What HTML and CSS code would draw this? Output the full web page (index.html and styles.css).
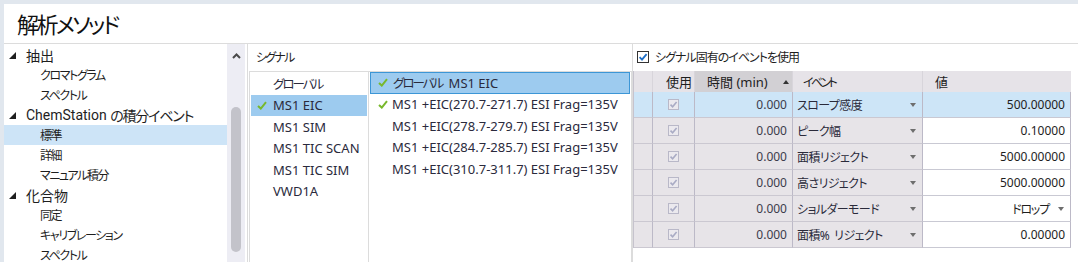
FILE: index.html
```html
<!DOCTYPE html>
<html lang="ja">
<head>
<meta charset="utf-8">
<title>解析メソッド</title>
<link rel="stylesheet" href="styles.css">
</head>
<body>
<div class="window">
  <header class="title">解析メソッド</header>
  <div class="main">
    <aside class="nav">
      <ul class="tree">
        <li class="node"><span class="tri"></span>抽出</li>
        <li class="leaf">クロマトグラム</li>
        <li class="leaf">スペクトル</li>
        <li class="node"><span class="tri"></span>ChemStation&nbsp;<span class="ja">の積分イベント</span></li>
        <li class="leaf sel">標準</li>
        <li class="leaf">詳細</li>
        <li class="leaf">マニュアル積分</li>
        <li class="node"><span class="tri"></span>化合物</li>
        <li class="leaf">同定</li>
        <li class="leaf">キャリブレーション</li>
        <li class="leaf">スペクトル</li>
      </ul>
      <div class="scrollbar">
        <div class="up"><svg width="9" height="6" viewBox="0 0 9 6"><path d="M1 5 L4.5 1.5 L8 5" fill="none" stroke="#4a4a4a" stroke-width="2"/></svg></div>
        <div class="thumb"></div>
      </div>
    </aside>
    <section class="signals">
      <div class="sig-label">シグナル</div>
      <div class="listbox">
        <ul class="list types">
          <li><span class="mark"></span><span class="ja">グローバル</span></li>
          <li class="sel"><span class="mark"><svg width="10" height="9" viewBox="0 0 10 9"><path d="M1 5 L3.8 7.6 L9 1.2" fill="none" stroke="#78b82c" stroke-width="2"/></svg></span>MS1 EIC</li>
          <li><span class="mark"></span>MS1 SIM</li>
          <li><span class="mark"></span>MS1 TIC SCAN</li>
          <li><span class="mark"></span>MS1 TIC SIM</li>
          <li><span class="mark"></span>VWD1A</li>
        </ul>
        <ul class="list sigs">
          <li class="sel"><span class="mark"><svg width="10" height="9" viewBox="0 0 10 9"><path d="M1 5 L3.8 7.6 L9 1.2" fill="none" stroke="#78b82c" stroke-width="2"/></svg></span><span class="ja">グローバル</span>&nbsp;MS1 EIC</li>
          <li><span class="mark"><svg width="10" height="9" viewBox="0 0 10 9"><path d="M1 5 L3.8 7.6 L9 1.2" fill="none" stroke="#78b82c" stroke-width="2"/></svg></span>MS1 +EIC(270.7-271.7) ESI Frag=135V</li>
          <li><span class="mark"></span>MS1 +EIC(278.7-279.7) ESI Frag=135V</li>
          <li><span class="mark"></span>MS1 +EIC(284.7-285.7) ESI Frag=135V</li>
          <li><span class="mark"></span>MS1 +EIC(310.7-311.7) ESI Frag=135V</li>
        </ul>
      </div>
    </section>
    <section class="events">
      <label class="chkrow"><span class="box"><svg width="10" height="10" viewBox="0 0 10 10"><path d="M1.6 5.2 L4 7.6 L8.6 2.2" fill="none" stroke="#1c6dc6" stroke-width="1.8"/></svg></span>シグナル固有のイベントを使用</label>
      <div class="grid">
        <div class="row head">
          <div class="h"></div>
          <div class="h use">使用</div>
          <div class="h time sorted">時間 (min)<span class="sort"></span></div>
          <div class="h ev">イベント</div>
          <div class="h val">値</div>
        </div>
        <div class="row sel">
          <div class="c"></div>
          <div class="c use"><span class="dbox"><svg width="9" height="9" viewBox="0 0 9 9"><path d="M1.5 4.6 L3.6 6.8 L7.6 2" fill="none" stroke="#a9abc4" stroke-width="1.6"/></svg></span></div>
          <div class="c time">0.000</div>
          <div class="c ev"><span>スロープ感度</span><span class="dd"></span></div>
          <div class="c val">500.00000</div>
        </div>
        <div class="row">
          <div class="c"></div>
          <div class="c use"><span class="dbox"><svg width="9" height="9" viewBox="0 0 9 9"><path d="M1.5 4.6 L3.6 6.8 L7.6 2" fill="none" stroke="#a9abc4" stroke-width="1.6"/></svg></span></div>
          <div class="c time">0.000</div>
          <div class="c ev"><span>ピーク幅</span><span class="dd"></span></div>
          <div class="c val">0.10000</div>
        </div>
        <div class="row">
          <div class="c"></div>
          <div class="c use"><span class="dbox"><svg width="9" height="9" viewBox="0 0 9 9"><path d="M1.5 4.6 L3.6 6.8 L7.6 2" fill="none" stroke="#a9abc4" stroke-width="1.6"/></svg></span></div>
          <div class="c time">0.000</div>
          <div class="c ev"><span>面積リジェクト</span><span class="dd"></span></div>
          <div class="c val">5000.00000</div>
        </div>
        <div class="row">
          <div class="c"></div>
          <div class="c use"><span class="dbox"><svg width="9" height="9" viewBox="0 0 9 9"><path d="M1.5 4.6 L3.6 6.8 L7.6 2" fill="none" stroke="#a9abc4" stroke-width="1.6"/></svg></span></div>
          <div class="c time">0.000</div>
          <div class="c ev"><span>高さリジェクト</span><span class="dd"></span></div>
          <div class="c val">5000.00000</div>
        </div>
        <div class="row">
          <div class="c"></div>
          <div class="c use"><span class="dbox"><svg width="9" height="9" viewBox="0 0 9 9"><path d="M1.5 4.6 L3.6 6.8 L7.6 2" fill="none" stroke="#a9abc4" stroke-width="1.6"/></svg></span></div>
          <div class="c time">0.000</div>
          <div class="c ev"><span>ショルダーモード</span><span class="dd"></span></div>
          <div class="c val combo"><span class="ja">ドロップ</span><span class="dd"></span></div>
        </div>
        <div class="row">
          <div class="c"></div>
          <div class="c use"><span class="dbox"><svg width="9" height="9" viewBox="0 0 9 9"><path d="M1.5 4.6 L3.6 6.8 L7.6 2" fill="none" stroke="#a9abc4" stroke-width="1.6"/></svg></span></div>
          <div class="c time">0.000</div>
          <div class="c ev"><span>面積%<span class="gap"></span>リジェクト</span><span class="dd"></span></div>
          <div class="c val">0.00000</div>
        </div>
      </div>
    </section>
  </div>
</div>
</body>
</html>
```

FILE: styles.css
```css
* { box-sizing: border-box; margin: 0; padding: 0; }
html, body { height: 100%; }
body {
  background: #e1e7ee;
  padding: 4px 0 0 4px;
  overflow: hidden;
  font-family: "Noto Sans", "Noto Sans CJK JP", sans-serif;
  font-feature-settings: "palt";
  font-size: 12px;
  color: #1e1e1e;
}
.window {
  background: #fff;
  height: 258px;
  display: flex;
  flex-direction: column;
}
.title {
  height: 40px;
  border-bottom: 1px solid #dcdcdc;
  padding-left: 13px;
  font-family: "Noto Sans CJK JP", sans-serif;
  font-size: 22px;
  line-height: 38px;
  letter-spacing: -2.6px;
  color: #111;
}
.main { display: flex; flex: 1; min-height: 0; }

/* navigation tree */
.nav { width: 243px; display: flex; }
.tree { width: 223px; list-style: none; padding-top: 1px; }
.tree li { height: 20px; white-space: nowrap; display: flex; align-items: center; }
.node {
  font-family: Roboto, "Noto Sans CJK JP", sans-serif;
  font-size: 14px;
  padding-left: 5px;
}
.node .ja { letter-spacing: -1.2px; }
.tri {
  width: 0; height: 0;
  border-left: 7px solid transparent;
  border-bottom: 7px solid #1e1e1e;
  margin-right: 10px;
}
.leaf { padding-left: 36px; font-size: 12px; letter-spacing: -1.4px; }
.leaf.sel { background: #cde4f7; }
.scrollbar {
  width: 18px;
  background: #ededf4;
  display: flex;
  flex-direction: column;
}
.up { height: 16px; display: flex; align-items: flex-end; justify-content: center; padding-bottom: 1px; }
.thumb {
  margin: 47px 4px 0;
  height: 145px;
  border-radius: 5px;
  background: #c3c3ca;
}

/* signals */
.signals {
  width: 385px;
  border-left: 1px solid #dcdcdc;
  display: flex;
  flex-direction: column;
}
.sig-label { height: 27px; line-height: 27px; padding-left: 8px; font-size: 12px; letter-spacing: -1.8px; }
.listbox {
  flex: 1;
  margin-left: 1px;
  border: 1px solid #dcdcdc;
  border-bottom: none;
  display: flex;
}
.list { list-style: none; }
.list li {
  height: 21.5px;
  display: flex;
  align-items: center;
  white-space: nowrap;
  font-size: 13px;
  color: #2a2a3c;
}
.list .ja { font-size: 12.5px; letter-spacing: -2px; }
.sigs .ja { margin-right: 3px; }
.mark { width: 22px; flex: none; display: flex; align-items: center; }
.types { width: 119px; border-right: 1px solid #dcdcdc; padding: 1px; }
.types .mark { padding-left: 6px; }
.types li.sel { background: #9dcbef; }
.sigs { flex: 1; padding: 0 1px; }
.sigs .mark { padding-left: 8px; }
.sigs li.sel { background: #9dcbef; border: 1px solid #3c96d6; }
.sigs li.sel .mark { padding-left: 7px; }

/* events */
.events { flex: 1; border-left: 1px solid #dcdcdc; }
.chkrow {
  height: 27px;
  display: flex;
  align-items: center;
  padding-left: 4px;
  padding-bottom: 2px;
  font-size: 12px;
  letter-spacing: -1px;
}
.box {
  width: 12px; height: 12px;
  border: 1px solid #333;
  margin-right: 6px;
  display: flex; align-items: center; justify-content: center;
}
.grid {
  display: grid;
  grid-template-columns: 19px 42px 98px 130px 148px;
  grid-template-rows: 21px;
  grid-auto-rows: 26px;
  width: 438px;
  border-left: 1px solid #c6c3cd;
}
.row { display: contents; }
.h {
  background: #e6e3e8;
  border-right: 1px solid #d8d5db;
  display: flex;
  align-items: center;
  font-size: 13px;
  white-space: nowrap;
}
.h.use { justify-content: flex-end; padding-right: 2px; }
.h.time { padding-left: 12px; }
.h.sorted { background: #d2d0d4; }
.sort {
  width: 0; height: 0;
  border-left: 3.5px solid transparent;
  border-right: 3.5px solid transparent;
  border-bottom: 4px solid #333;
  margin-left: 15px;
}
.h.ev { padding-left: 10px; font-size: 12px; letter-spacing: -2.6px; }
.h.val { padding-left: 12px; border-right: none; }
.c {
  background: #e7e4e8;
  border-right: 1px solid #bcb9c7;
  border-bottom: 1px solid #cbc8d1;
  display: flex;
  align-items: center;
  font-size: 12px;
  white-space: nowrap;
}
.c.use { justify-content: center; }
.dbox {
  width: 11px; height: 11px;
  border: 1px solid #b9b8c8;
  background: #ebe9ee;
  display: flex; align-items: center; justify-content: center;
}
.c.time { justify-content: flex-end; padding-right: 5px; color: #3c3c4c; }
.c.ev { justify-content: space-between; padding: 0 6px 0 4px; color: #2a2a3a; letter-spacing: -0.6px; }
.gap { display: inline-block; width: 5px; }
.dd {
  width: 0; height: 0;
  border-left: 3.5px solid transparent;
  border-right: 3.5px solid transparent;
  border-top: 4px solid #6e6e6e;
}
.c.val { background: #fff; justify-content: flex-end; padding-right: 5px; border-bottom-color: #c9c9d3; }
.c.val.combo { padding-right: 6px; }
.c.val.combo .ja { letter-spacing: -1.2px; }
.c.val.combo .dd { margin-left: 9px; }
.row.sel .c { background: #cde5f7; }
```
